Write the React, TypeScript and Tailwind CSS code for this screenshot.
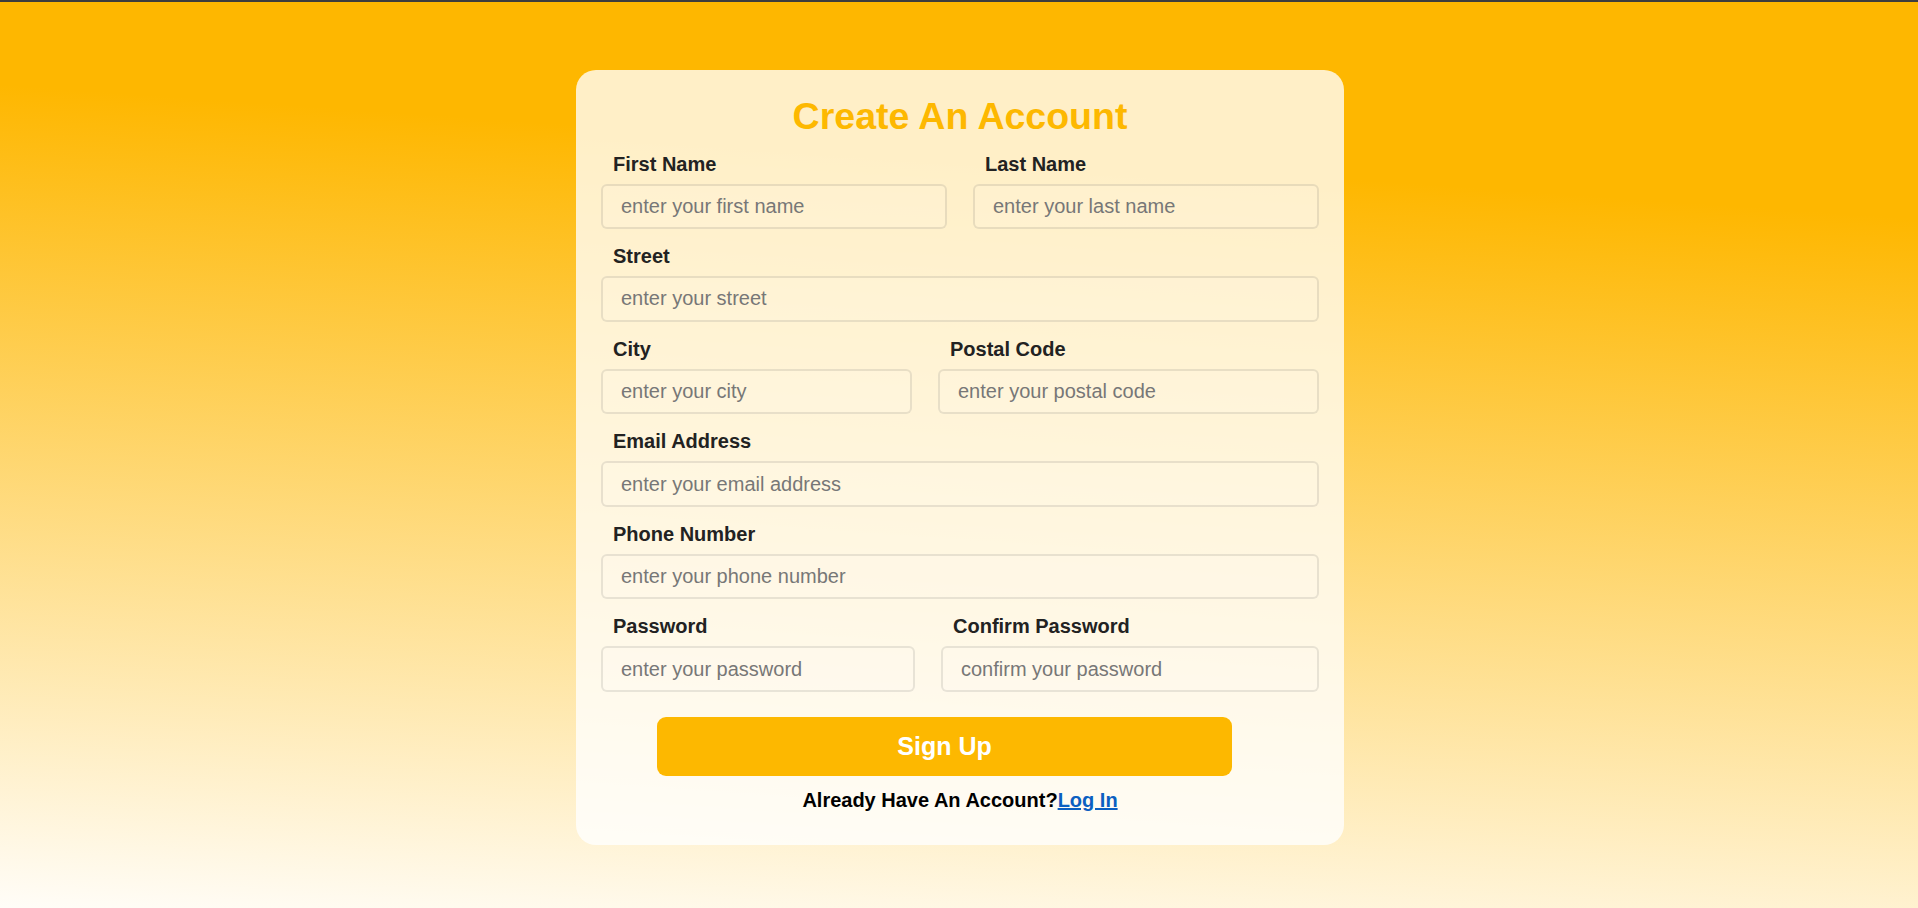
import React from "react";

type Field = {
  label: string;
  placeholder: string;
  type?: string;
  width: string;
};

const rows: Field[][] = [
  [
    { label: "First Name", placeholder: "enter your first name", width: "flex-1" },
    { label: "Last Name", placeholder: "enter your last name", width: "flex-1" },
  ],
  [{ label: "Street", placeholder: "enter your street", width: "flex-1" }],
  [
    { label: "City", placeholder: "enter your city", width: "w-[311px]" },
    { label: "Postal Code", placeholder: "enter your postal code", width: "flex-1" },
  ],
  [{ label: "Email Address", placeholder: "enter your email address", type: "email", width: "flex-1" }],
  [{ label: "Phone Number", placeholder: "enter your phone number", type: "tel", width: "flex-1" }],
  [
    { label: "Password", placeholder: "enter your password", type: "password", width: "w-[314px]" },
    { label: "Confirm Password", placeholder: "confirm your password", type: "password", width: "flex-1" },
  ],
];

function FormField({ field }: { field: Field }) {
  return (
    <div className={`flex flex-col ${field.width}`}>
      <label className="mb-[9px] h-[22px] pl-[12px] text-[20px] font-bold leading-[22px] text-[#222]">
        {field.label}
      </label>
      <input
        type={field.type ?? "text"}
        placeholder={field.placeholder}
        className="h-[45.6px] w-full rounded-md border-2 border-black/[0.09] bg-white/10 px-[18px] text-[20px] text-[#333] outline-none placeholder:text-[#777]"
      />
    </div>
  );
}

export default function App() {
  return (
    <div className="min-h-screen bg-[linear-gradient(184deg,#feb700_21%,#fffdf8_100%)] font-['Liberation_Sans',Arial,sans-serif]">
      {/* thin dark strip along the top edge */}
      <div className="h-[2px] bg-[#3d3d3d]" />

      <div className="pt-[68px] pb-[60px] pl-[2px]">
        <form
          onSubmit={(e) => e.preventDefault()}
          className="mx-auto w-[768px] rounded-[20px] bg-white/[0.78] px-[25px] pt-[25px] pb-[33px]"
        >
          <h1 className="text-center text-[37.5px] font-bold leading-[42.5px] text-[#fdb800]">
            Create An Account
          </h1>

          <div className="mt-[15px] flex flex-col gap-[16px]">
            {rows.map((row, index) => (
              <div key={index} className="flex gap-[26px]">
                {row.map((field) => (
                  <FormField key={field.label} field={field} />
                ))}
              </div>
            ))}
          </div>

          <button
            type="submit"
            className="mt-[25px] ml-[56px] h-[59px] w-[575px] rounded-[9px] bg-[#fdb800] text-[25px] font-bold text-white"
          >
            Sign Up
          </button>

          <p className="mt-[13px] text-center text-[20px] font-bold leading-[23px] text-black">
            Already Have An Account?
            <a href="#" className="text-[#0b5fc1] underline">
              Log In
            </a>
          </p>
        </form>
      </div>
    </div>
  );
}
